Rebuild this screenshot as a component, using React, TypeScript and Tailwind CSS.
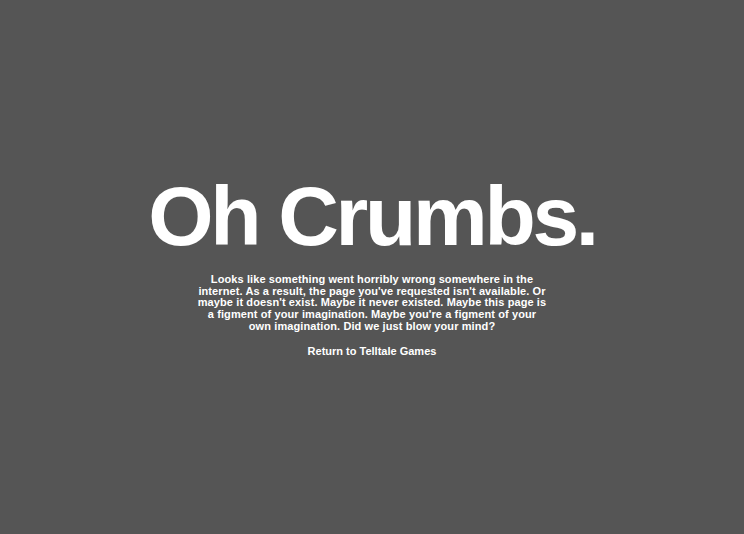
export default function App() {
  return (
    <div className="w-[744px] h-[534px] bg-[#555555] flex flex-col items-center pt-[166px] text-white">
      <h1 className="font-['Liberation_Sans',sans-serif] font-bold text-[84px] leading-[100px] tracking-[-3.3px]">Oh Crumbs.</h1>
      <p className="mt-[8px] w-[380px] text-center font-['Liberation_Sans',Arial,sans-serif] font-bold text-[11px] leading-[11.7px] tracking-[0.1px]">
        Looks like something went horribly wrong somewhere in the<br />
        internet. As a result, the page you've requested isn't available. Or<br />
        maybe it doesn't exist. Maybe it never existed. Maybe this page is<br />
        a figment of your imagination. Maybe you're a figment of your<br />
        own imagination. Did we just blow your mind?
      </p>
      <a className="mt-[12px] font-['Liberation_Sans',Arial,sans-serif] font-bold text-[11px] leading-[12px] text-white">Return to Telltale Games</a>
    </div>
  );
}
